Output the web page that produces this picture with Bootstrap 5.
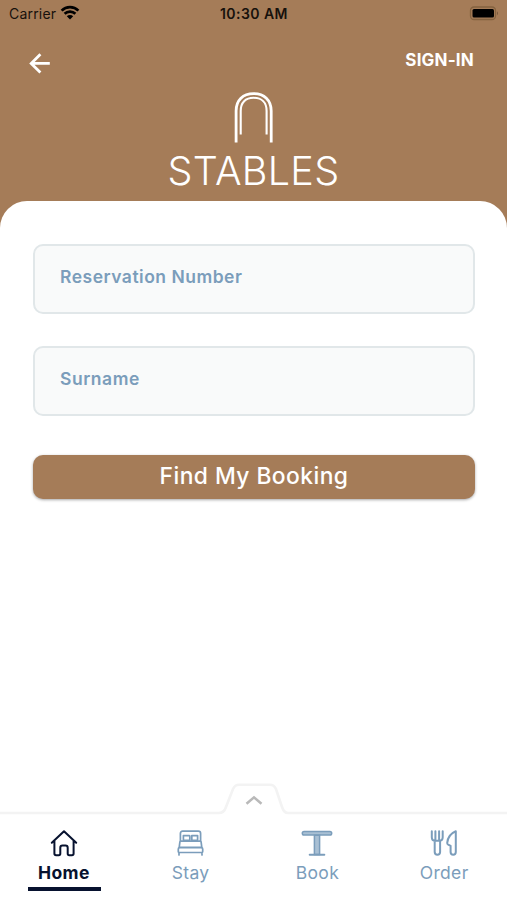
<!DOCTYPE html>
<html lang="en">
<head>
<meta charset="utf-8">
<meta name="viewport" content="width=device-width, initial-scale=1">
<title>Stables</title>
<link href="https://cdn.jsdelivr.net/npm/bootstrap@5.3.0/dist/css/bootstrap.min.css" rel="stylesheet">
<style>
:root { --tan: #a57c58; --steel: #7b9dbb; --navy: #07122f; }
body { font-family: Inter, "Open Sans", sans-serif; height: 100vh; overflow: hidden; }
svg { display: block; }
.hero { background: var(--tan); height: 230px; }
.status { height: 28px; padding: 0 8px 0 9px; font-size: 14px; color: #17110c; line-height: 28px; }
.status .side { flex: 1 1 0; }
.carrier { letter-spacing: .2px; }
.clock { font-weight: 600; letter-spacing: .45px; }
.topnav { height: 64px; padding: 0 33px 0 29px; }
.back { margin-top: 25px; }
.signin { font-weight: 700; font-size: 17px; line-height: 20px; margin-top: 22px; letter-spacing: .2px; }
.brand-name { font-weight: 300; font-size: 39.5px; line-height: 40px; margin-top: 8px; letter-spacing: .3px; }
.sheet { margin-top: -29px; border-radius: 27px 27px 0 0; padding: 43px 32px 0 33px; }
.field { height: 70px; border: 2px solid #e1e7e9; border-radius: 10px; background: #f9fafa; padding: 0 25px 6px; margin-bottom: 32px; font-size: 17.5px; font-weight: 600; color: var(--steel); }
.field::placeholder { color: var(--steel); opacity: 1; }
.field.res { letter-spacing: .5px; }
.field.sur { letter-spacing: .55px; }
.find { height: 44px; margin-top: 7px; border-radius: 10px; background: var(--tan) !important; color: #fff !important; border: 0; padding: 0 0 2px; font-size: 22.8px; font-weight: 500; letter-spacing: .45px; box-shadow: 0 1px 3px rgba(0,0,0,.35); }
.tabs { height: 118px; }
.tabs-edge { height: 33px; }
.tab { color: var(--steel); font-size: 17.5px; line-height: 20px; padding-left: 1px; letter-spacing: .35px; }
.tab svg { margin-top: 14px; margin-bottom: 6px; }
.tab.active { color: var(--navy); font-weight: 700; }
.tab .bar { width: 73px; height: 4px; margin-top: 4px; margin-left: 1px; background: var(--navy); }
</style>
</head>
<body class="d-flex flex-column bg-white">
<header class="hero flex-shrink-0">
  <div class="status d-flex">
    <div class="side d-flex"><span class="carrier">Carrier</span>
      <svg class="ms-1" width="20" height="26" viewBox="0 0 20 26" fill="none" stroke="#000" stroke-width="2.7"><path d="M1.6 10.6a12 12 0 0 1 16.8 0M4.6 13.8a7.7 7.7 0 0 1 10.8 0"/><path d="M6.8 16.2a4.6 4.6 0 0 1 6.4 0L10 19.6z" fill="#000" stroke="none"/></svg>
    </div>
    <span class="clock">10:30 AM</span>
    <div class="side d-flex justify-content-end">
      <svg width="30" height="27" viewBox="0 0 30 27"><rect x="1.5" y="7" width="25" height="12.5" rx="3.5" fill="none" stroke="#84623f" stroke-width="1.3"/><rect x="3.5" y="9" width="21.5" height="8.5" rx="1.5"/><path d="M28 11.3q2 2 0 4z" fill="#75573c"/></svg>
    </div>
  </div>
  <nav class="topnav d-flex justify-content-between">
    <a class="back" href="#" aria-label="Back"><svg width="22" height="21" viewBox="0 0 22 21" fill="none" stroke="#fff" stroke-width="2.8"><path d="M20.8 10.4H2M11.4 1.2 2.2 10.4l9.2 9.2"/></svg></a>
    <a class="signin text-white text-decoration-none" href="#">SIGN-IN</a>
  </nav>
  <div class="d-flex flex-column align-items-center text-white">
    <svg width="40" height="51" viewBox="0 0 40 51" fill="none" stroke="#fff"><path stroke-width="2.8" d="M2.1 50.5V19C2.1 8 9 1.6 19.6 1.6S37.2 8 37.2 19v31.5"/><path stroke-width="2.1" d="M6.7 42.5V19C6.7 10.5 11.5 5.8 19.6 5.8S32.6 10.5 32.6 19v23.5"/></svg>
    <div class="brand-name">STABLES</div>
  </div>
</header>
<main class="sheet bg-white flex-grow-1">
  <input class="field res d-block w-100" placeholder="Reservation Number" aria-label="Reservation Number">
  <input class="field sur d-block w-100" placeholder="Surname" aria-label="Surname">
  <button class="find btn w-100">Find My Booking</button>
</main>
<footer class="tabs flex-shrink-0">
  <svg class="tabs-edge" width="507" height="33" viewBox="0 0 507 33" fill="none"><path stroke="#f3f3f3" stroke-width="2.6" d="M0 31H219Q224 31 226 25L233 7Q235 2.8 239 2.8H270Q274 2.8 276 7L282 25Q284 31 288 31H507"/><path stroke="#b9b9b9" stroke-width="2.5" d="m246.5 21.8 7.5-6.5 7.5 6.5"/></svg>
  <nav class="row g-0">
    <div class="tab active col d-flex flex-column align-items-center">
      <svg width="28" height="28" viewBox="0 0 28 28" fill="none" stroke="currentColor" stroke-width="2" stroke-linejoin="round" stroke-linecap="round"><path d="M1.8 13.8 14 2.2l12.2 11.6M4.4 11.8v12.7q0 1.7 1.7 1.7h2.7q1.5 0 1.5-1.7v-5.8q0-2.2 2.2-2.2h3q2.2 0 2.2 2.2v5.8q0 1.7 1.5 1.7h2.7q1.7 0 1.7-1.7V11.8"/></svg>
      <span>Home</span><i class="bar"></i>
    </div>
    <div class="tab col d-flex flex-column align-items-center">
      <svg width="28" height="28" viewBox="0 0 28 28" fill="none" stroke="currentColor" stroke-width="1.7" stroke-linejoin="round" stroke-linecap="round"><path d="M3.4 12V4.5Q3.4 2.2 5.7 2.2h15.6q2.3 0 2.3 2.3V12M6.4 6.6h5.8q.6 0 .6.6v3.6q0 .6-.6.6H7q-.6 0-.6-.6zM14.8 6.6h5.8v4.2q0 .6-.6.6h-4.6q-.6 0-.6-.6zM3.6 12.2h19.8q.6 0 .7.6l.7 5.6H2.2l.7-5.6q.1-.6.7-.6zM2.6 18.6h21.8q1.3 0 1.3 1.3v2.6q0 1-1 1H2.3q-1 0-1-1v-2.6q0-1.3 1.3-1.3zM2 23.5V26M25 23.5V26"/></svg>
      <span>Stay</span>
    </div>
    <div class="tab col d-flex flex-column align-items-center">
      <svg width="32" height="28" viewBox="0 0 32 28" stroke="currentColor" stroke-width="1.5" stroke-linecap="round"><rect x="1.3" y="2.5" width="29.4" height="3.6" rx="1.8" fill="#a9c0d4"/><path d="M13.4 6.2h5.2v19.3h-5.2z" fill="#a9c0d4"/><path d="M8.7 25.7h14.6" stroke-width="2" fill="none"/></svg>
      <span>Book</span>
    </div>
    <div class="tab col d-flex flex-column align-items-center">
      <svg width="28" height="28" viewBox="0 0 28 28" fill="none" stroke="currentColor" stroke-width="2" stroke-linejoin="round" stroke-linecap="round"><path d="M1.8 2.3v5.9q0 3.5 3.6 3.5h3.6q3.7 0 3.7-3.5V2.3M5.4 2.3V10.5M9.1 2.3V10.5M4.7 12v11q0 2.7 2.7 2.7t2.7-2.7V12M25.8 2.2v20.9q0 2.7-2.6 2.7t-2.6-2.7v-6.3l-2.4-1.2q-1.1-.6-1-1.8.8-8.4 8.6-11.6z"/></svg>
      <span>Order</span>
    </div>
  </nav>
</footer>
<script src="https://cdn.jsdelivr.net/npm/bootstrap@5.3.0/dist/js/bootstrap.bundle.min.js"></script>
</body>
</html>
